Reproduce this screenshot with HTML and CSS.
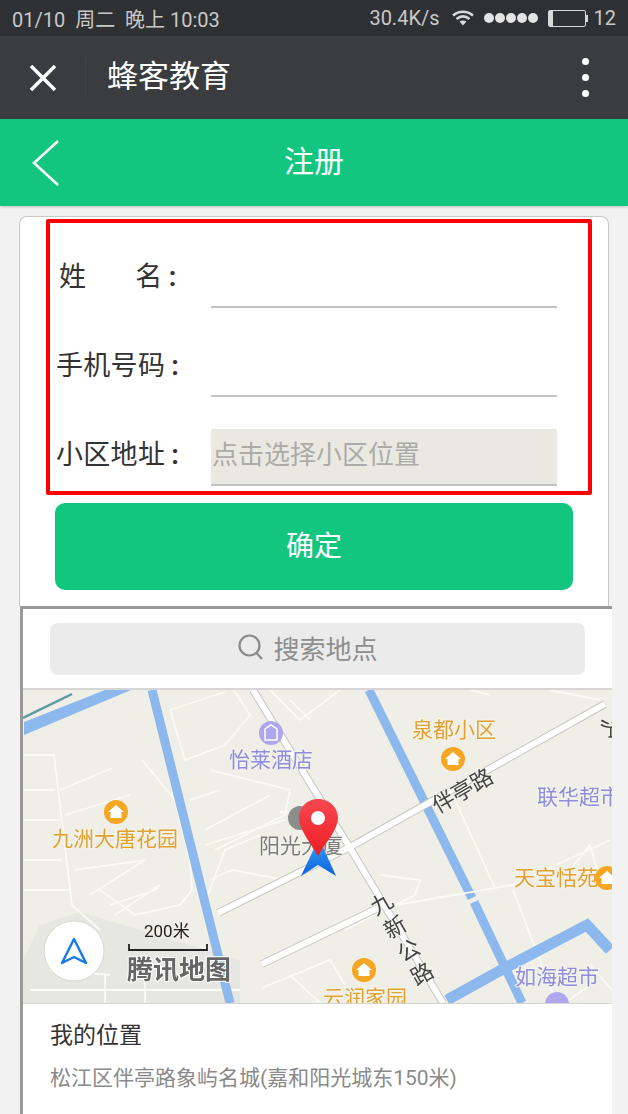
FILE: index.html
```html
<!DOCTYPE html>
<html lang="zh-CN">
<head>
    <meta charset="UTF-8">
    <meta name="viewport" content="width=device-width, initial-scale=1.0">
    <title>注册 - 蜂客教育</title>
    <link rel="stylesheet" href="styles.css">
</head>
<body>
    <div class="status-bar">
        <span>01/10&nbsp; 周二&nbsp; 晚上 10:03</span>
        <div class="status-right">
            <span>30.4K/s</span>
            <svg class="wifi" width="22" height="16" viewBox="0 0 22 16">
                <path d="M1 5.500C7 .5 15 .5 21 5.500M4.500 9C8.500 5.800 13.500 5.800 17.500 9" fill="none" stroke="#d8d8d8" stroke-width="2.600"/>
                <path d="M7.500 11.500C9.500 10 12.500 10 14.500 11.500L11 15.500Z" fill="#d8d8d8"/>
            </svg>
            <div class="signal"><i></i><i></i><i></i><i></i><i></i></div>
            <div class="battery"><i></i></div>
            <span>12</span>
        </div>
    </div>

    <header class="app-bar">
        <svg class="close-icon" width="28" height="28" viewBox="0 0 28 28">
            <path d="M2 2L26 26M26 2L2 26" stroke="#fff" stroke-width="3.500" fill="none"/>
        </svg>
        <h1>蜂客教育</h1>
        <div class="more"><i></i><i></i><i></i></div>
    </header>

    <div class="title-bar">
        <svg class="back-icon" width="28" height="48" viewBox="0 0 28 48">
            <path d="M26 2L2 24L26 46" stroke="#fff" stroke-width="2.500" fill="none"/>
        </svg>
        <h2>注册</h2>
    </div>

    <main class="card">
        <form class="reg-form">
            <label class="row">
                <span class="row-label name-label">姓<span class="name-gap"></span>名<span class="colon">:</span></span>
                <input type="text">
            </label>
            <label class="row">
                <span class="row-label">手机号码<span class="colon">:</span></span>
                <input type="text">
            </label>
            <label class="row">
                <span class="row-label">小区地址<span class="colon">:</span></span>
                <input class="address" type="text" placeholder="点击选择小区位置">
            </label>
        </form>
        <button class="ok-btn" type="button">确定</button>
    </main>

    <section class="picker">
        <div class="search-wrap">
            <div class="search-box">
                <svg width="28" height="28" viewBox="0 0 28 28">
                    <circle cx="12.500" cy="12.500" r="10" fill="none" stroke="#8a8a8a" stroke-width="2.200"/>
                    <path d="M19.500 20L25 26" stroke="#8a8a8a" stroke-width="2.200" fill="none"/>
                </svg>
                <span>搜索地点</span>
            </div>
        </div>

        <svg class="map" width="589" height="313" viewBox="23 690 589 313">
            <rect x="23" y="690" width="589" height="313" fill="#efeee7"/>
            <!-- grey patch behind the scale -->
            <path d="M40 925L80 912L240 960L240 1003L23 1003L23 960Z" fill="#e6e6e2"/>

            <!-- small streets -->
            <g class="street">
                <path d="M24 755H54L72 905L100 930M24 790H55M24 820H60M24 860H62M24 890H70"/>
                <path d="M60 790L112 768M65 815L130 795M75 870L145 860L90 895M85 840L135 830"/>
                <path d="M142 760L175 800L190 860L192 890L180 905L135 915L100 890"/>
                <path d="M115 915L160 885L155 890M110 905L155 890"/>
                <path d="M170 710L225 692M170 710L185 760L225 745L250 715L235 692M210 770L290 790L285 815L215 850M190 800L220 790M205 830L270 795"/>
                <path d="M205 845L285 820M208 895L225 850L260 835M210 880L232 870L285 880M280 812H300"/>
                <path d="M270 690L300 720L340 690M290 700L310 720"/>
                <path d="M30 990H240M105 975V1003M145 975V1003M50 970L110 975"/>
                <path d="M262 988L330 960L345 985M290 975L320 1003M345 930L415 895L420 880L380 875M375 890L385 905"/>
                <path d="M455 800L495 888M513 890L555 1000M513 885L610 840M570 870L590 845L600 880"/>
                <path d="M470 690L490 695M550 690L600 700M590 965L612 990M565 1003L590 985"/>
            </g>

            <!-- rivers -->
            <path d="M24 722L105 690H131L24 735Z" fill="#8cb8ee"/>
            <path d="M23 718L72 694" stroke="#5d9aa3" stroke-width="2.500" fill="none"/>
            <path d="M152 690L230 1003" class="river" stroke-width="9"/>
            <path d="M369 690L472 898" class="river" stroke-width="9"/>
            <path d="M474 902L522 1003" class="river" stroke-width="9"/>
            <path d="M447 1000L503 969L587 925L610 950" class="river" stroke-width="11"/>

            <!-- main roads -->
            <g class="road-edge">
                <path d="M218 913L350 847L605 704"/>
                <path d="M253 690L350 848L443 1003"/>
                <path d="M262 964L378 908"/>
            </g>
            <g class="road-fill">
                <path d="M218 913L350 847L605 704"/>
                <path d="M253 690L350 848L443 1003"/>
                <path d="M262 964L378 908"/>
            </g>
            <path d="M378 908L513 885" class="street"/>

            <!-- places -->
            <circle cx="271" cy="733" r="12" fill="#b0a6ee"/>
            <path d="M265 740V729L271 725L277 729V740Z" fill="none" stroke="#fff" stroke-width="1.500"/>
            <text class="map-label purple" x="229" y="767">怡莱酒店</text>

            <circle cx="116" cy="812" r="12" fill="#f5a623"/>
            <path class="house" d="M116 805L124 812H121.500V818H110.500V812H108Z"/>
            <text class="map-label orange" x="52" y="846">九洲大唐花园</text>

            <circle cx="300" cy="818" r="12" fill="#8d8d8d"/>
            <text class="map-label grey" x="259" y="853">阳光大厦</text>

            <circle cx="453" cy="759" r="12" fill="#f5a623"/>
            <path class="house" d="M453 752L461 759H458.500V765H447.500V759H445Z"/>
            <text class="map-label orange" x="412" y="737">泉都小区</text>

            <text class="map-label purple" x="537" y="804">联华超市</text>

            <text class="map-label orange" x="514" y="885">天宝恬苑</text>
            <circle cx="607" cy="878" r="12" fill="#f5a623"/>
            <path class="house" d="M607 871L615 878H612.500V884H601.500V878H599Z"/>

            <circle cx="364" cy="970" r="12" fill="#f5a623"/>
            <path class="house" d="M364 963L372 970H369.500V976H358.500V970H356Z"/>
            <text class="map-label orange" x="323" y="1005">云润家园</text>

            <text class="map-label purple" x="515" y="984">如海超市</text>
            <circle cx="557" cy="1004" r="12" fill="#b0a6ee"/>

            <!-- road names -->
            <text class="road-name" transform="translate(438 814) rotate(-30)">伴亭路</text>
            <text class="road-name" transform="translate(376 916) rotate(60)" rotate="-90 -90 -90 -90" letter-spacing="5">九新公路</text>
            <text class="road-name" transform="translate(603 718) rotate(90)" font-size="20">沪</text>

            <!-- my location arrow and pin -->
            <defs>
                <linearGradient id="arrowFill" x1="0" y1="0" x2="0" y2="1">
                    <stop offset="0" stop-color="#3da2f5"/>
                    <stop offset="1" stop-color="#0a63e0"/>
                </linearGradient>
                <linearGradient id="pinFill" x1="0" y1="0" x2="0" y2="1">
                    <stop offset="0" stop-color="#f7484f"/>
                    <stop offset="1" stop-color="#ee1c25"/>
                </linearGradient>
            </defs>
            <path d="M319 838L336 876L318 865L301 876Z" fill="url(#arrowFill)"/>
            <path d="M318 799C307 799 299 807 299 818C299 830 311 843 318 856C325 843 338 830 338 818C338 807 329 799 318 799Z" fill="url(#pinFill)"/>
            <circle cx="318" cy="818" r="7" fill="#fff"/>

            <!-- scale and logo -->
            <text class="scale-text" x="144" y="937">200米</text>
            <path d="M129 944V950H207V944" fill="none" stroke="#222" stroke-width="1.800"/>
            <text class="map-logo" x="127" y="979">腾讯地图</text>

            <!-- locate button -->
            <circle cx="74" cy="951" r="30" fill="#fff" stroke="#d8d8d4" stroke-width="1"/>
            <path d="M74 939L86 963L74 957L62 963Z" fill="none" stroke="#1a7be8" stroke-width="2.500" stroke-linejoin="round"/>
        </svg>

        <div class="my-place">
            <h3>我的位置</h3>
            <p>松江区伴亭路象屿名城(嘉和阳光城东150米)</p>
        </div>
    </section>
</body>
</html>
```

FILE: styles.css
```css
/* General Styles */
html, body {
    margin: 0;
    padding: 0;
    height: 100%;
    overflow: hidden;
}

body {
    width: 628px;
    height: 1114px;
    font-family: Roboto, "Noto Sans CJK SC", sans-serif;
    background: #f2f2f2;
    color: #333;
}

h1, h2, h3, p {
    margin: 0;
    font-weight: normal;
}

/* Status bar */
.status-bar {
    height: 36px;
    padding: 0 12px;
    display: flex;
    align-items: center;
    justify-content: space-between;
    background: #2f3033;
    color: #c9c9c9;
    font-size: 20px;
}

.status-right {
    display: flex;
    align-items: center;
}

.wifi {
    margin-left: 12px;
}

.signal {
    display: flex;
    gap: 1px;
    margin-left: 10px;
}

.signal i {
    width: 10px;
    height: 10px;
    border-radius: 50%;
    background: #e4e4e4;
}

.battery {
    position: relative;
    width: 38px;
    height: 17px;
    margin: 0 8px 0 10px;
    border: 1px solid #d8d8d8;
    border-radius: 2px;
    box-sizing: border-box;
}

.battery i {
    display: block;
    width: 4px;
    height: 100%;
    background: #d8d8d8;
}

.battery::after {
    content: "";
    position: absolute;
    right: -3px;
    top: 4px;
    width: 2px;
    height: 7px;
    background: #d8d8d8;
}

/* App bar */
.app-bar {
    height: 83px;
    display: flex;
    align-items: center;
    background: #3a3c40;
    color: #fff;
}

.close-icon {
    margin-left: 29px;
}

.app-bar h1 {
    margin-left: 28px;
    padding-left: 21px;
    height: 40px;
    line-height: 38px;
    border-left: 1px solid #434548;
    font-size: 31px;
}

.more {
    margin-left: auto;
    margin-right: 39px;
    display: flex;
    flex-direction: column;
    gap: 9px;
}

.more i {
    width: 7px;
    height: 7px;
    border-radius: 50%;
    background: #fff;
}

/* Green title */
.title-bar {
    height: 87px;
    position: relative;
    display: flex;
    align-items: center;
    justify-content: center;
    background: #13c67f;
    box-shadow: 0 1px 3px rgba(0, 0, 0, 0.2);
    color: #fff;
}

.title-bar h2 {
    font-size: 30px;
    padding-bottom: 8px;
}

.back-icon {
    position: absolute;
    left: 32px;
    top: 20px;
}

/* Form card */
.card {
    width: 590px;
    height: 390px;
    margin: 10px 0 0 19px;
    box-sizing: border-box;
    background: #fff;
    border: 1px solid #c8c8c8;
    border-bottom: none;
    border-radius: 8px 8px 0 0;
    overflow: hidden;
}

.reg-form {
    width: 546px;
    box-sizing: border-box;
    margin: 2px 0 0 26px;
    padding: 28px 31px 5px 6px;
    border: 4px solid #f00;
    border-radius: 2px;
    display: flex;
    flex-direction: column;
    gap: 32px;
}

.row {
    display: flex;
    align-items: center;
    height: 57px;
}

.row-label {
    width: 155px;
    flex: none;
    color: #333;
    font-size: 27px;
    white-space: nowrap;
    padding-bottom: 11px;
    letter-spacing: 0.3px;
}

.name-label {
    box-sizing: border-box;
    padding-left: 3px;
}

.name-gap {
    display: inline-block;
    width: 49px;
}

.colon {
    margin-left: 6px;
    font-weight: bold;
}

.row input {
    flex: 1;
    min-width: 0;
    height: 57px;
    box-sizing: border-box;
    padding: 0 1px 4px;
    border: none;
    border-bottom: 2px solid #c4c4c4;
    background: #fff;
    font-family: inherit;
    font-size: 26px;
    outline: none;
}

.row input.address {
    background: #e9e9e2;
}

.row input::placeholder {
    color: #ababa8;
    opacity: 1;
}

.ok-btn {
    display: block;
    width: 518px;
    height: 87px;
    margin: 8px 0 0 35px;
    padding: 0 0 6px;
    border: none;
    border-radius: 10px;
    background: #13c67f;
    color: #fff;
    font-family: inherit;
    font-size: 28px;
}

/* Map picker */
.picker {
    width: 592px;
    height: 508px;
    margin-left: 20px;
    box-sizing: border-box;
    background: #fff;
    border-top: 3px solid #999;
    border-left: 3px solid #999;
}

.search-wrap {
    height: 81px;
    box-sizing: border-box;
    padding: 14px 27px 0;
    border-bottom: 2px solid #d6d6d6;
}

.search-box {
    width: 535px;
    height: 52px;
    box-sizing: border-box;
    padding: 0 20px 4px 0;
    display: flex;
    align-items: center;
    justify-content: center;
    gap: 8px;
    border-radius: 8px;
    background: #ebebeb;
    color: #8e8e8e;
    font-size: 26px;
}

.map {
    display: block;
    filter: blur(0.4px);
}

.street {
    fill: none;
    stroke: #fafaf6;
    stroke-width: 1.800;
}

.river {
    fill: none;
    stroke: #8cb8ee;
}

.road-edge path {
    fill: none;
    stroke: #c6c6c0;
    stroke-width: 8;
}

.road-fill path {
    fill: none;
    stroke: #fff;
    stroke-width: 6;
}

.map-label {
    font-size: 21px;
    stroke: #f4f4ee;
    stroke-width: 2px;
    paint-order: stroke;
}

.purple { fill: #8f8cdc; }
.orange { fill: #e2a12e; }
.grey { fill: #7c7c7c; }

.house {
    fill: #fff;
}

.road-name {
    font-size: 22px;
    fill: #444;
    stroke: #f4f4ee;
    stroke-width: 2px;
    paint-order: stroke;
}

.scale-text {
    font-size: 17px;
    fill: #222;
}

.map-logo {
    font-size: 26px;
    font-weight: bold;
    fill: #666;
    stroke: #fff;
    stroke-width: 2px;
    paint-order: stroke;
}

.my-place {
    padding: 12px 27px;
    border-top: 1px solid #d6d6d0;
}

.my-place h3 {
    font-size: 23px;
    color: #333;
}

.my-place p {
    margin-top: 11px;
    font-size: 21px;
    color: #8a8a8a;
}
```
